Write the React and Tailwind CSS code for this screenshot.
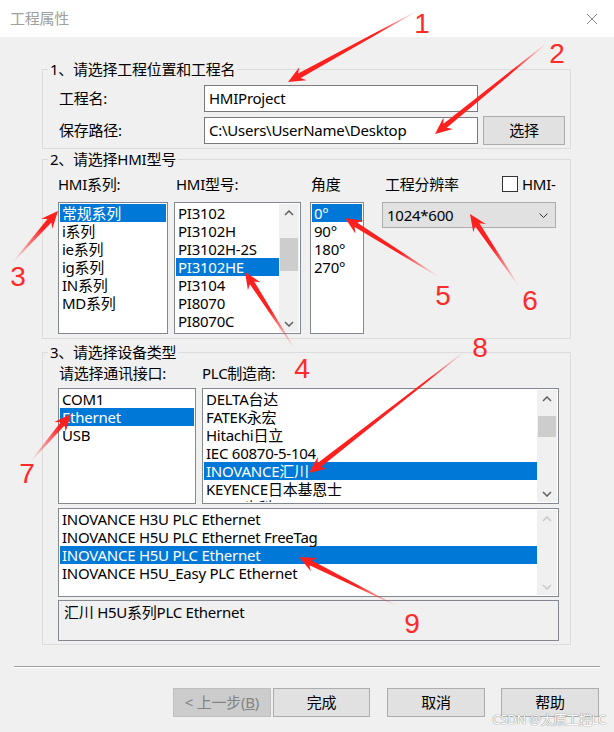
import clsx from 'clsx';

// Windows-style "工程属性" dialog with red callout annotations

const ui = "font-['Noto_Sans','Noto_Sans_CJK_SC',sans-serif] tracking-[-0.25px]";

const Chevron = ({ up, color = '#606060' }) => (
    <svg width="10" height="6" viewBox="0 0 10 6">
        <polyline
            points={up ? '1,5 5,1 9,5' : '1,1 5,5 9,1'}
            fill="none"
            stroke={color}
            strokeWidth="1.5"
        />
    </svg>
);

// Vertical scrollbar inside list boxes
const ScrollBar = ({ thumbTop, thumbHeight, disabled }) => (
    <div className="flex w-[20px] flex-col bg-[#f0f0f0]">
        <div className="flex h-[17px] items-center justify-center">
            <Chevron up color={disabled ? '#c8c8c8' : '#606060'} />
        </div>
        <div className="flex-1">
            {!disabled && <div className="mx-[1px] bg-[#cdcdcd]" style={{ marginTop: thumbTop, height: thumbHeight }} />}
        </div>
        <div className="flex h-[17px] items-center justify-center">
            <Chevron color={disabled ? '#c8c8c8' : '#606060'} />
        </div>
    </div>
);

const ListBox = ({ items, selected, className, scroll }) => (
    <div className={clsx('flex overflow-hidden border border-[#828790] bg-white p-[1px]', className)}>
        <div className="min-w-0 flex-1 overflow-hidden">
            {items.map((t, i) => (
                <div
                    key={i}
                    className={clsx(
                        'h-[18px] whitespace-nowrap pl-[2px] leading-[18px]',
                        i === selected ? 'bg-[#0078d7] text-white' : 'text-black'
                    )}
                >
                    {t}
                </div>
            ))}
        </div>
        {scroll && <ScrollBar {...scroll} />}
    </div>
);

const Group = ({ title, className, children }) => (
    <div className={clsx('relative ml-[42px] w-[529px] border border-[#dcdcdc]', className)}>
        <span className="absolute left-[5px] top-[-10px] bg-[#f0f0f0] px-[2px] leading-[18px]">{title}</span>
        {children}
    </div>
);

const Button = ({ children, disabled, className }) => (
    <div
        className={clsx(
            'flex h-[29px] items-center justify-center border',
            disabled ? 'border-[#bfbfbf] bg-[#cccccc] text-[#838383]' : 'border-[#adadad] bg-[#e1e1e1] text-black',
            className
        )}
    >
        {children}
    </div>
);

// tail -> tip, red tapered arrows
const arrows = [
    [417, 11, 288, 82],
    [547, 43, 435, 134],
    [13, 262, 58, 211],
    [294, 348, 245, 272],
    [439, 277, 345, 218],
    [518, 285, 470, 214],
    [31, 461, 71, 414],
    [464, 352, 309, 473],
    [397, 606, 299, 557],
];

const numbers = [
    ['1', 422, 33],
    ['2', 557, 63],
    ['3', 18, 286],
    ['4', 302, 378],
    ['5', 443, 305],
    ['6', 530, 310],
    ['7', 27, 483],
    ['8', 480, 357],
    ['9', 412, 633],
];

const Annotations = () => (
    <svg className="pointer-events-none absolute left-0 top-0" width="614" height="732">
        <defs>
            <linearGradient id="fade" gradientUnits="userSpaceOnUse" x1="0" y1="0" x2="45" y2="0">
                <stop offset="0" stopColor="#ff2020" stopOpacity="0" />
                <stop offset="1" stopColor="#ff2020" stopOpacity="1" />
            </linearGradient>
        </defs>
        {arrows.map(([x1, y1, x2, y2], i) => {
            const L = Math.hypot(x2 - x1, y2 - y1);
            const a = (Math.atan2(y2 - y1, x2 - x1) * 180) / Math.PI;
            const h = 17;
            const pts = [
                [0, -0.4],
                [L - h + 4, -2.6],
                [L - h, -7.5],
                [L, 0],
                [L - h, 7.5],
                [L - h + 4, 2.6],
                [0, 0.4],
            ]
                .map((p) => p.join(','))
                .join(' ');
            return (
                <g key={i} transform={`translate(${x1},${y1}) rotate(${a})`}>
                    <polygon points={pts} fill="url(#fade)" />
                </g>
            );
        })}
        {numbers.map(([n, x, y]) => (
            <text key={n} x={x} y={y} textAnchor="middle" fontSize="28" fill="#ff2a2a" fontFamily="Liberation Sans, sans-serif">
                {n}
            </text>
        ))}
    </svg>
);

const App = () => {
    return (
        <div className={clsx('relative h-[732px] w-[614px] overflow-hidden text-[15px] text-black', ui)}>
            {/* title bar */}
            <div className="flex h-[37px] items-center justify-between bg-white pl-[10px] pr-[16px]">
                <span className="text-[#a0a0a0]">工程属性</span>
                <svg width="12" height="12" viewBox="0 0 12 12">
                    <path d="M1 1 L11 11 M11 1 L1 11" stroke="#8a8a8a" strokeWidth="1" />
                </svg>
            </div>

            <div className="h-[695px] bg-[#f0f0f0] pt-[32px]">
                {/* 1 */}
                <Group title="1、请选择工程位置和工程名" className="h-[80px]">
                    <div className="flex flex-col gap-[4px] pl-[16px] pt-[15px]">
                        <div className="flex items-center">
                            <span className="w-[145px]">工程名:</span>
                            <div className="flex h-[27px] w-[274px] items-center border border-[#7a7a7a] bg-white pl-[4px]">HMIProject</div>
                        </div>
                        <div className="flex items-center">
                            <span className="w-[145px]">保存路径:</span>
                            <div className="flex h-[27px] w-[274px] items-center border border-[#7a7a7a] bg-white pl-[4px]">
                                C:\Users\UserName\Desktop
                            </div>
                            <Button className="ml-[5px] h-[27px] w-[82px]">选择</Button>
                        </div>
                    </div>
                </Group>

                {/* 2 */}
                <Group title="2、请选择HMI型号" className="mt-[10px] h-[180px]">
                    <div className="flex pt-[15px]">
                        <div className="ml-[15px] w-[110px]">
                            <div className="h-[18px] leading-[18px]">HMI系列:</div>
                            <ListBox
                                className="mt-[9px] h-[132px]"
                                selected={0}
                                items={['常规系列', 'i系列', 'ie系列', 'ig系列', 'IN系列', 'MD系列']}
                            />
                        </div>
                        <div className="ml-[6px] w-[127px]">
                            <div className="h-[18px] pl-[2px] leading-[18px]">HMI型号:</div>
                            <ListBox
                                className="mt-[9px] h-[132px]"
                                selected={3}
                                scroll={{ thumbTop: 17, thumbHeight: 33 }}
                                items={['PI3102', 'PI3102H', 'PI3102H-2S', 'PI3102HE', 'PI3104', 'PI8070', 'PI8070C', 'PI8070H']}
                            />
                        </div>
                        <div className="ml-[9px] w-[54px]">
                            <div className="h-[18px] pl-[1px] leading-[18px]">角度</div>
                            <ListBox className="mt-[9px] h-[132px]" selected={0} items={['0°', '90°', '180°', '270°']} />
                        </div>
                        <div className="ml-[18px] w-[174px]">
                            <div className="flex h-[18px] items-center leading-[18px]">
                                <span className="pl-[3px]">工程分辨率</span>
                                <div className="ml-auto flex w-[54px] items-center overflow-hidden">
                                    <div className="h-[16px] w-[16px] shrink-0 border border-[#333333] bg-white" />
                                    <span className="ml-[4px] whitespace-nowrap">HMI-HMI</span>
                                </div>
                            </div>
                            <div className="mt-[9px] flex h-[26px] items-center justify-between border border-[#adadad] bg-[#e1e1e1] pl-[4px] pr-[7px]">
                                <span>1024*600</span>
                                <svg width="9" height="5" viewBox="0 0 9 5">
                                    <polyline points="0.5,0.5 4.5,4.5 8.5,0.5" fill="none" stroke="#333" strokeWidth="1" />
                                </svg>
                            </div>
                        </div>
                    </div>
                </Group>

                {/* 3 */}
                <Group title="3、请选择设备类型" className="mt-[13px] h-[293px]">
                    <div className="pl-[15px] pt-[11px]">
                        <div className="flex h-[18px] leading-[18px]">
                            <span className="w-[144px] pl-[1px]">请选择通讯接口:</span>
                            <span>PLC制造商:</span>
                        </div>
                        <div className="mt-[6px] flex">
                            <ListBox className="h-[116px] w-[138px]" selected={1} items={['COM1', 'Ethernet', 'USB']} />
                            <ListBox
                                className="ml-[6px] h-[116px] w-[357px]"
                                selected={4}
                                scroll={{ thumbTop: 9, thumbHeight: 21 }}
                                items={['DELTA台达', 'FATEK永宏', 'Hitachi日立', 'IEC 60870-5-104', 'INOVANCE汇川', 'KEYENCE日本基恩士', 'Kinco步科']}
                            />
                        </div>
                        <ListBox
                            className="mt-[4px] h-[89px] w-[501px]"
                            selected={2}
                            scroll={{ disabled: true }}
                            items={[
                                'INOVANCE H3U PLC Ethernet',
                                'INOVANCE H5U PLC Ethernet FreeTag',
                                'INOVANCE H5U PLC Ethernet',
                                'INOVANCE H5U_Easy PLC Ethernet',
                            ]}
                        />
                        <div className="mt-[3px] h-[41px] w-[501px] border border-[#828790] bg-[#f0f0f0] pl-[5px] pt-[2px] leading-[18px]">
                            汇川 H5U系列PLC Ethernet
                        </div>
                    </div>
                </Group>

                <div className="mx-[14px] mt-[21px] h-[2px] border-b border-t border-b-white border-t-[#a0a0a0]" />

                <div className="mt-[20px] flex pl-[173px]">
                    <Button disabled className="w-[98px]">
                        &lt; 上一步(<span className="underline">B</span>)
                    </Button>
                    <Button className="ml-[2px] w-[97px]">完成</Button>
                    <Button className="ml-[17px] w-[98px]">取消</Button>
                    <Button className="ml-[16px] w-[98px]">帮助</Button>
                </div>
            </div>

            <span className="absolute bottom-[3px] right-[8px] text-[13px] text-white [text-shadow:0_0_1px_#888,0_0_1px_#888]">
                CSDN @太原工控LC
            </span>

            <Annotations />
        </div>
    );
};

export default App;
